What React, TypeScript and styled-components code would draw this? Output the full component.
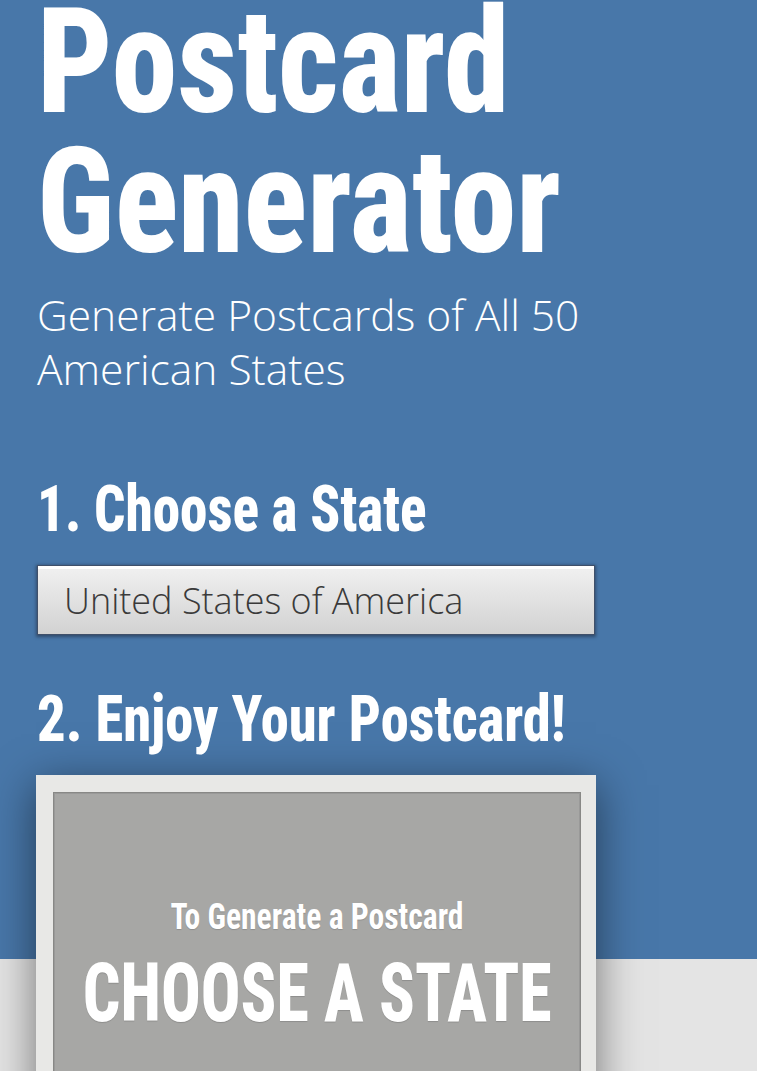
import React from "react";
import styled, { createGlobalStyle } from "styled-components";

const GlobalStyle = createGlobalStyle`
  html, body { margin: 0; padding: 0; }
  body {
    background: #e4e4e4;
    font-family: "Open Sans", "Liberation Sans", sans-serif;
    overflow: hidden;
  }
`;

const condensed = `
  font-family: "Roboto Condensed", "Roboto", "Liberation Sans", sans-serif;
  font-stretch: condensed;
  white-space: nowrap;
`;

const Page = styled.div`
  min-height: 1071px;
  background: #e4e4e4;
`;

const Hero = styled.header`
  background: #4877a9;
  padding: 0 37px 203px;
  display: flex;
  flex-direction: column;
  align-items: flex-start;
`;

const Title = styled.h1`
  ${condensed}
  margin: -7px 0 0;
  font-size: 146px;
  line-height: 140px;
  font-weight: 800;
  color: #fff;
  transform: scaleX(0.905);
  transform-origin: left center;
`;

const Subtitle = styled.p`
  margin: 15px 0 0;
  font-size: 42.5px;
  line-height: 54px;
  font-weight: 300;
  color: #fff;
`;

const StepHeading = styled.h2<{ $gap: number; $squeeze: number }>`
  ${condensed}
  margin: ${(p) => p.$gap}px 0 0;
  font-size: 64px;
  line-height: 72px;
  font-weight: 800;
  color: #fff;
  transform: scaleX(${(p) => p.$squeeze});
  transform-origin: left center;
`;

const StateSelect = styled.select`
  appearance: none;
  -webkit-appearance: none;
  margin-top: 19px;
  width: 558px;
  height: 70px;
  box-sizing: border-box;
  padding: 0 0 0 26px;
  border: 1px solid #40506a;
  border-radius: 0;
  background: linear-gradient(#f1f1f1, #d2d2d2);
  box-shadow: inset 0 3px 0 #ffffff, 0 1px 3px 1px rgba(30, 40, 60, 0.55);
  font-family: "Open Sans", "Liberation Sans", sans-serif;
  font-size: 36px;
  font-weight: 300;
  color: #3a3a3a;
  outline: none;
`;

const CardArea = styled.section`
  margin-top: -184px;
  padding: 0 0 0 36px;
`;

const Card = styled.div`
  width: 560px;
  box-sizing: border-box;
  padding: 17px 15px 0 17px;
  background: #e8e8e6;
  box-shadow: 0 10px 42px rgba(0, 0, 0, 0.5);
`;

const CardFace = styled.div`
  border: 1px solid #888886;
  background: #a7a7a5;
  min-height: 400px;
  padding-top: 103px;
  display: flex;
  flex-direction: column;
  align-items: center;
  box-shadow: inset 0 0 0 1px rgba(0, 0, 0, 0.08);
`;

const CardLead = styled.div`
  ${condensed}
  font-size: 36px;
  line-height: 43px;
  font-weight: 700;
  color: #fff;
  text-shadow: 0 1px 1px rgba(0, 0, 0, 0.15);
  transform: scaleX(0.877);
`;

const CardCall = styled.div`
  ${condensed}
  margin-top: 9px;
  font-size: 82px;
  line-height: 90px;
  font-weight: 800;
  color: #fff;
  text-shadow: 0 1px 1px rgba(0, 0, 0, 0.15);
  transform: scaleX(0.805);
`;

export default function App() {
  return (
    <>
      <GlobalStyle />
      <Page>
        <Hero>
          <Title>
            Postcard
            <br />
            Generator
          </Title>
          <Subtitle>
            Generate Postcards of All 50
            <br />
            American States
          </Subtitle>
          <StepHeading $gap={78} $squeeze={0.861}>
            1. Choose a State
          </StepHeading>
          <StateSelect defaultValue="usa">
            <option value="usa">United States of America</option>
          </StateSelect>
          <StepHeading $gap={49} $squeeze={0.883}>
            2. Enjoy Your Postcard!
          </StepHeading>
        </Hero>
        <CardArea>
          <Card>
            <CardFace>
              <CardLead>To Generate a Postcard</CardLead>
              <CardCall>CHOOSE A STATE</CardCall>
            </CardFace>
          </Card>
        </CardArea>
      </Page>
    </>
  );
}
